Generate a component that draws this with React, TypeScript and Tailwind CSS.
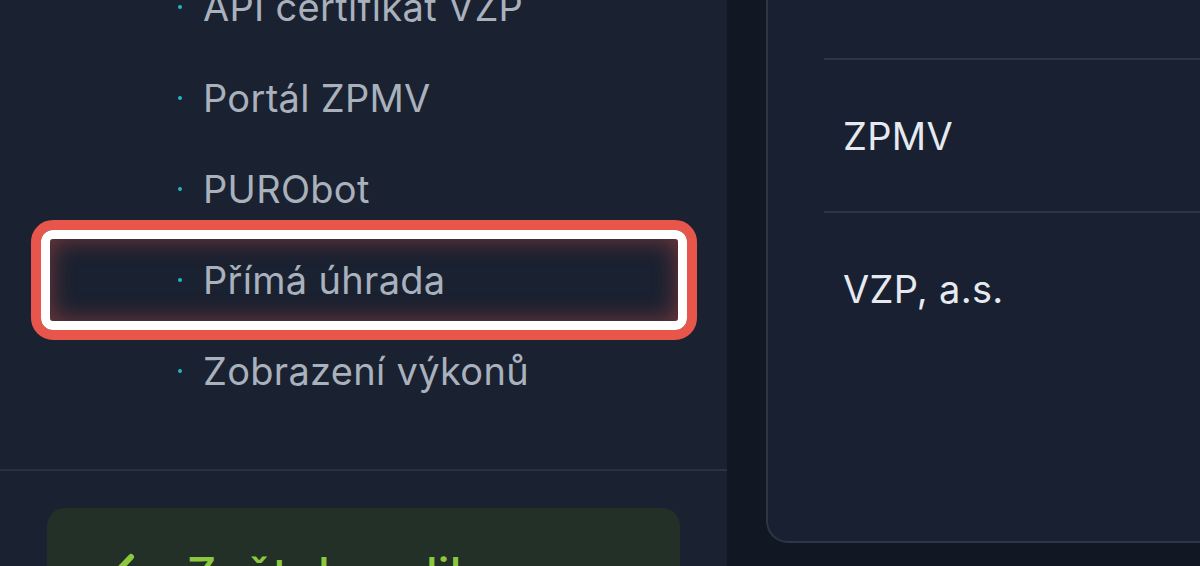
import React from "react";

const items = [
  "API certifikát VZP",
  "Portál ZPMV",
  "PURObot",
  "Přímá úhrada",
  "Zobrazení výkonů",
];

export default function App() {
  return (
    <div
      className="flex h-[566px] w-[1200px] overflow-hidden bg-[#111723]"
      style={{ fontFamily: "Inter, 'Noto Sans', sans-serif" }}
    >
      {/* Sidebar */}
      <aside className="flex w-[727px] shrink-0 flex-col bg-[#1a2130]">
        <ul className="-mt-[39px] flex shrink-0 flex-col">
          {items.map((t, i) => (
            <li key={t} className="relative flex h-[91px] shrink-0 items-center pl-[178px]">
              <span className="mr-[21px] h-[4px] w-[4px] rounded-full bg-[#1fb8c9]" />
              <span className="text-[38px] leading-none tracking-[0.3px] text-[#a9b1bd]">{t}</span>
              {i === 3 && (
                <div className="pointer-events-none absolute left-[31px] right-[30px] -top-[14px] -bottom-[15px] rounded-[22px] border-[10px] border-[#e8554a]">
                  <div className="h-full w-full rounded-[12px] border-[9px] border-white">
                    <div className="h-full w-full rounded-[3px] shadow-[inset_0_0_24px_rgba(214,80,72,0.5)]" />
                  </div>
                </div>
              )}
            </li>
          ))}
        </ul>
        <div className="mt-[53px] h-[2px] w-full shrink-0 bg-[#283241]" />
        <div className="mx-[47px] mt-[37px] flex h-[120px] shrink-0 items-start rounded-[18px] bg-[#233027] pl-[51px] pt-[43px]">
          <svg width="40" height="60" viewBox="0 0 40 60" className="shrink-0">
            <path d="M33 6 L12 28 L33 50" stroke="#8dc63f" strokeWidth="6" fill="none" strokeLinecap="round" strokeLinejoin="round" />
          </svg>
          <span className="ml-[49px] whitespace-nowrap text-[46px] font-medium leading-none tracking-[0.3px] text-[#8dc63f]">Zpět do aplikace</span>
        </div>
      </aside>

      {/* Gap + card */}
      <div className="flex-1 shrink-0 pl-[39px]">
        <div className="h-[543px] rounded-bl-[22px] border-b-2 border-l-2 border-[#2c3645] bg-[#182031] pl-[56px]">
          <div className="h-[58px]" />
          <div className="h-[2px] bg-[#2c3645]" />
          <div className="flex h-[151px] items-center pl-[19px]">
            <span className="text-[38px] leading-none tracking-[0.3px] text-[#e6e9ef]">ZPMV</span>
          </div>
          <div className="h-[2px] bg-[#2c3645]" />
          <div className="flex h-[151px] items-center pl-[19px]">
            <span className="text-[38px] leading-none tracking-[0.3px] text-[#e6e9ef]">VZP, a.s.</span>
          </div>
        </div>
      </div>
    </div>
  );
}
